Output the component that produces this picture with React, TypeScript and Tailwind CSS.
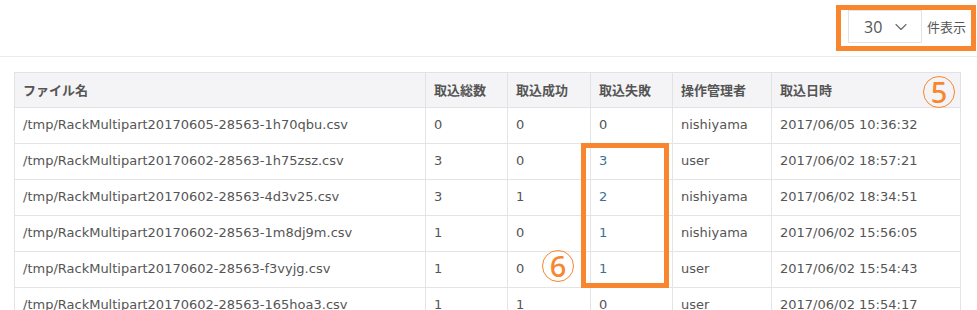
import React from "react";
import { ChevronDown } from "lucide-react";

const rows = [
  ["/tmp/RackMultipart20170605-28563-1h70qbu.csv", "0", "0", "0", "nishiyama", "2017/06/05 10:36:32"],
  ["/tmp/RackMultipart20170602-28563-1h75zsz.csv", "3", "0", "3", "user", "2017/06/02 18:57:21"],
  ["/tmp/RackMultipart20170602-28563-4d3v25.csv", "3", "1", "2", "nishiyama", "2017/06/02 18:34:51"],
  ["/tmp/RackMultipart20170602-28563-1m8dj9m.csv", "1", "0", "1", "nishiyama", "2017/06/02 15:56:05"],
  ["/tmp/RackMultipart20170602-28563-f3vyjg.csv", "1", "0", "1", "user", "2017/06/02 15:54:43"],
  ["/tmp/RackMultipart20170602-28563-165hoa3.csv", "1", "1", "0", "user", "2017/06/02 15:54:17"],
];

const headers = ["ファイル名", "取込総数", "取込成功", "取込失敗", "操作管理者", "取込日時"];
const widths = [411, 82, 83, 82, 99, 189];

function Circled({ n }: { n: string }) {
  return (
    <div className="w-[32px] h-[32px] rounded-full border-[1.5px] border-[#f7862e] flex items-center justify-center text-[#f7862e] text-[29px] leading-none font-medium font-['Noto_Sans',sans-serif] pb-[1px]">
      {n}
    </div>
  );
}

export default function App() {
  return (
    <div className="w-[977px] h-[310px] overflow-hidden bg-white relative font-['DejaVu_Sans','Noto_Sans_CJK_JP',sans-serif] text-[#555]">
      <div className="h-[57px] border-b border-[#ececec] flex justify-end items-start pt-[5px] pr-[1px]">
        <div className="border-[5px] border-[#f7862e] flex items-start pl-[7px] pr-[5px] pb-[2px] h-[46px]">
          <div className="w-[74px] h-[33px] border border-[#e3e3e3] flex items-center pl-[15px] gap-[9px]">
            <span className="text-[16px] text-[#555] font-['Open_Sans',sans-serif] font-normal">30</span>
            <ChevronDown size={20} strokeWidth={1.3} className="text-[#666]" />
          </div>
          <span className="ml-[5px] h-[33px] flex items-center text-[13px] text-[#555] font-['Noto_Sans_CJK_JP',sans-serif]">件表示</span>
        </div>
      </div>
      <div className="pt-[15px] pl-[14px]">
        <table className="table-fixed border-collapse w-[946px] text-[13px]">
          <colgroup>
            {widths.map((w, i) => (
              <col key={i} style={{ width: w }} />
            ))}
          </colgroup>
          <thead>
            <tr className="bg-[#f4f4f6]">
              {headers.map((h) => (
                <th key={h} className="h-[35px] p-0 border border-[#e2e2e4] text-left font-bold px-[8px] text-[#555] font-['Noto_Sans_CJK_JP',sans-serif] text-[13px]">
                  {h}
                </th>
              ))}
            </tr>
          </thead>
          <tbody>
            {rows.map((r, ri) => (
              <tr key={ri}>
                {r.map((c, ci) => (
                  <td
                    key={ci}
                    className={`h-[36px] pt-0 pb-[1px] border border-[#e4e4e4] px-[8px] whitespace-nowrap ${
                      ci === 3 && c !== "0" ? "text-[#3d6f96]" : "text-[#555]"
                    }`}
                  >
                    {c}
                  </td>
                ))}
              </tr>
            ))}
          </tbody>
        </table>
      </div>
      <div className="absolute left-[923px] top-[76px]">
        <Circled n="5" />
      </div>
      <div className="absolute left-[542px] top-[250px]">
        <Circled n="6" />
      </div>
      <div className="absolute left-[581px] top-[143px] w-[88px] h-[145px] border-[5px] border-[#f7862e]" />
    </div>
  );
}
